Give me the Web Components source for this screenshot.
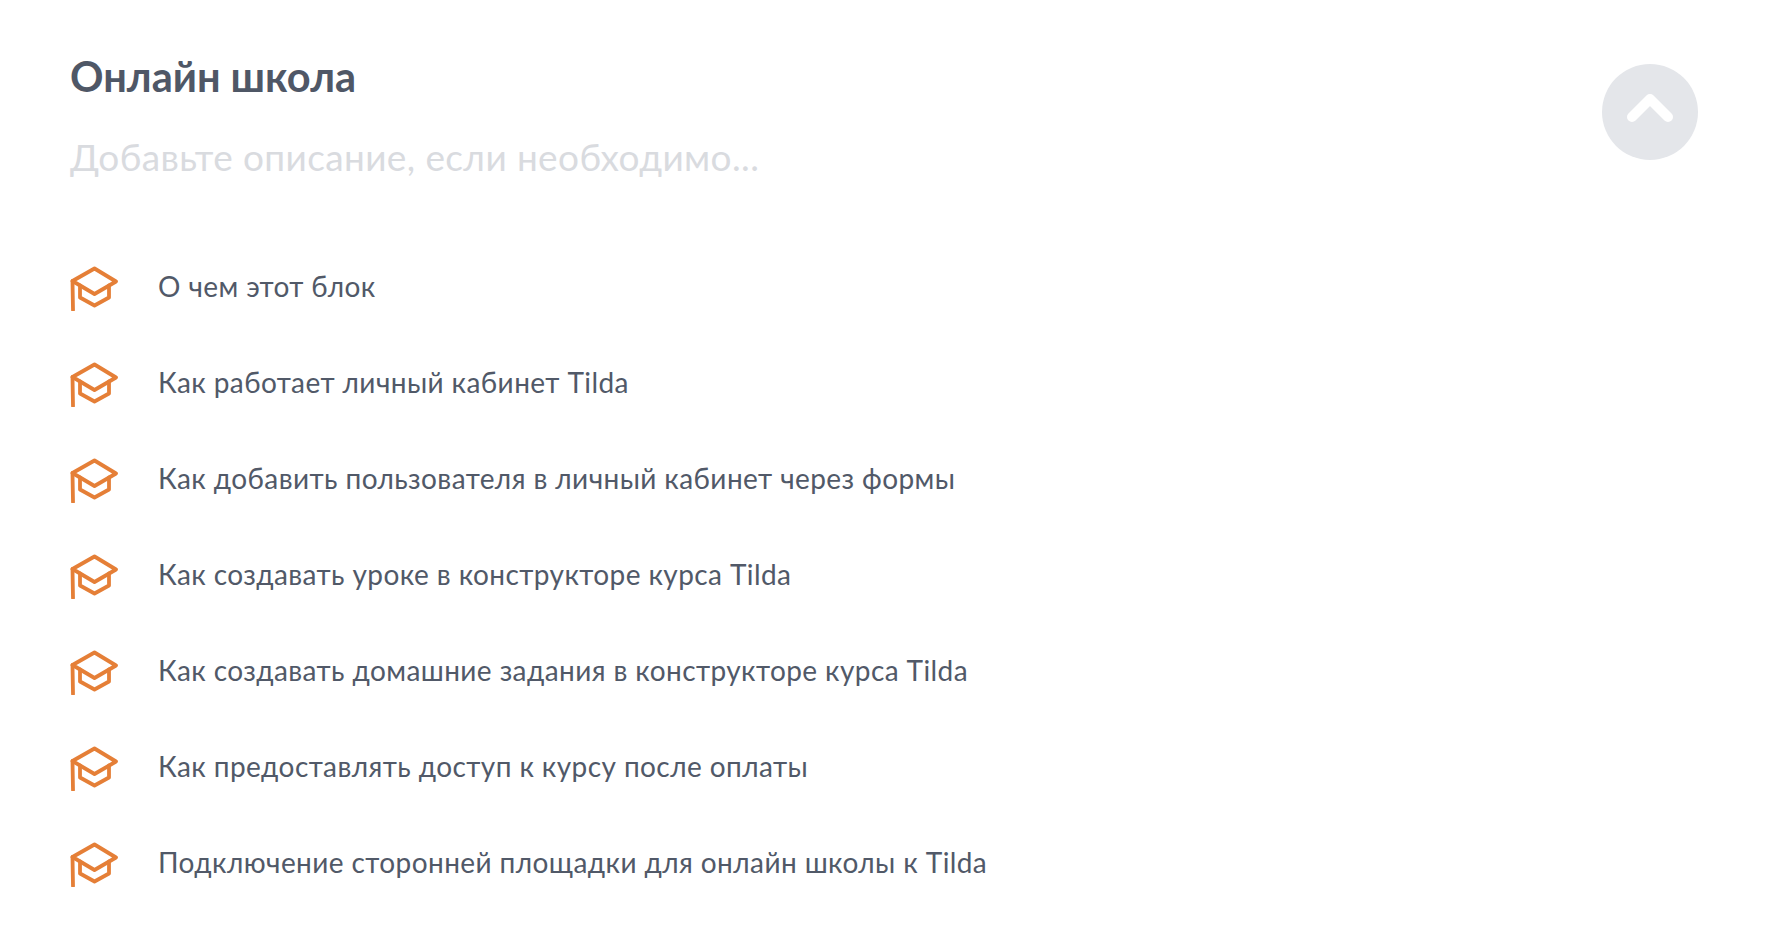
<!DOCTYPE html>
<html lang="ru"><head><meta charset="utf-8"><title>Онлайн школа</title>
<style>html,body{margin:0;background:#fff}</style></head>
<body>
<school-page></school-page>
<template id="hat"><style>:host{display:block;width:48px;height:46px;flex:none}svg{display:block}</style>
<svg width="48" height="46" viewBox="0 0 48 46" fill="none" stroke="#e57f37" stroke-width="3.8" stroke-linecap="round" stroke-linejoin="round"><path d="M2.5 16 24.500 3.500 46 16.500 24.500 29Z"/><path d="M10 20.500V32.500L24.500 40.500 39 32.500V20.500"/><path d="M2.500 16 3 45"/></svg></template>
<script>
const FONT='Lato,"Noto Sans",sans-serif';
class LessonRow extends HTMLElement{constructor(){super();const s=this.attachShadow({mode:'open'});
s.innerHTML=`<style>:host{display:flex;align-items:flex-start;gap:40px;height:96px}
.t{font:400 28px/36px ${FONT};letter-spacing:.41px;color:#515968;margin-top:3px}</style><hat-icon></hat-icon><div class="t"><slot></slot></div>`}}
class HatIcon extends HTMLElement{constructor(){super();this.attachShadow({mode:'open'}).append(document.getElementById('hat').content.cloneNode(true))}}
class TopButton extends HTMLElement{constructor(){super();this.attachShadow({mode:'open'}).innerHTML=`<style>:host{position:absolute;left:1602px;top:64px;width:96px;height:96px;border-radius:50%;background:#e4e6ea;display:block}svg{display:block}</style>
<svg width="96" height="96" viewBox="0 0 96 96" fill="none" stroke="#fff" stroke-width="10" stroke-linecap="round" stroke-linejoin="round"><path d="M30 53 48 35 66 53"/></svg>`}}
class SchoolPage extends HTMLElement{constructor(){super();this.attachShadow({mode:'open'}).innerHTML=`<style>:host{display:block;position:relative;width:1776px;height:940px;overflow:hidden;box-sizing:border-box;padding:48px 70px 0;font-family:${FONT}}
h1{margin:0;font:700 41.500px/56px ${FONT};color:#4f5766}
p{margin:29px 0 0;font:400 37px/48px ${FONT};letter-spacing:.38px;color:#d9dbdf}
.list{margin-top:84px;display:flex;flex-direction:column}</style>
<h1>Онлайн школа</h1><p>Добавьте описание, если необходимо...</p>
<div class="list">
<lesson-row>О чем этот блок</lesson-row>
<lesson-row>Как работает личный кабинет Tilda</lesson-row>
<lesson-row>Как добавить пользователя в личный кабинет через формы</lesson-row>
<lesson-row>Как создавать уроке в конструкторе курса Tilda</lesson-row>
<lesson-row>Как создавать домашние задания в конструкторе курса Tilda</lesson-row>
<lesson-row>Как предоставлять доступ к курсу после оплаты</lesson-row>
<lesson-row>Подключение сторонней площадки для онлайн школы к Tilda</lesson-row>
</div><top-button></top-button>`}}
customElements.define('hat-icon',HatIcon);customElements.define('lesson-row',LessonRow);customElements.define('top-button',TopButton);customElements.define('school-page',SchoolPage);
</script></body></html>
